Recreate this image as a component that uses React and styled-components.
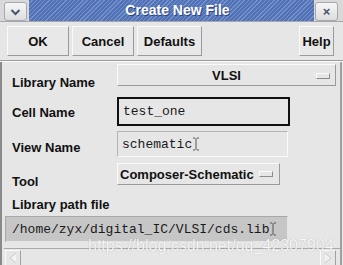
import React from 'react'
import styled, { createGlobalStyle } from 'styled-components'

const Global = createGlobalStyle`
  html, body { margin: 0; padding: 0; background: #e6e6e6; }
  body { font-family: "Liberation Sans", Arial, sans-serif; }
`;

const Window = styled.div`
  position: relative;
  width: 343px;
  height: 265px;
  overflow: hidden;
  background: #e6e6e6;
  display: flex;
  flex-direction: column;
`;

const TitleBar = styled.div`
  height: 21px;
  display: flex;
  background: #d9d9d9;
  border-bottom: 1px solid #a6a6a6;
`;

const TitleButton = styled.div`
  width: 21px;
  height: 17px;
  margin: 2px ${p => p.$right ? '5px' : '2px'} 0 ${p => p.$right ? '1px' : '4px'};
  border: 1px solid #a4a8b0;
  border-radius: 3px;
  background: linear-gradient(#f7f7f7, #dcdcdc);
  display: flex;
  align-items: center;
  justify-content: center;
  color: #4a5468;
  font-weight: bold;
  font-size: 13px;
`;

const TitleStrip = styled.div`
  flex: 1;
  background: repeating-linear-gradient(135deg, #5272b8 0 2px, #7591cc 2px 3px);
  color: #fff;
  font-weight: bold;
  font-size: 14px;
  line-height: 21px;
  text-align: center;
  padding-left: 12px;
  text-shadow: 1px 1px 0 #2c4380;
`;

const ButtonBar = styled.div`
  display: flex;
  gap: 3px;
  padding: 4px 9px 0 7px;
`;

const BarButton = styled.button`
  width: ${p => p.$w}px;
  height: 30px;
  margin-left: ${p => p.$push ? 'auto' : '0'};
  padding: 0;
  background: #e8e8e8;
  border: 1px solid;
  border-color: #fafafa #9a9a9a #9a9a9a #fafafa;
  font-family: "Liberation Sans", Arial, sans-serif;
  font-weight: bold;
  font-size: 13px;
  color: #111;
`;

const Separator = styled.div`
  margin-top: 4px;
  border-top: 1px solid #9c9c9c;
  border-bottom: 1px solid #fbfbfb;
`;

const Panel = styled.div`
  flex: 1;
  display: flex;
  flex-direction: column;
  padding-top: 2px;
  border-left: 2px solid #8a8a8a;
  border-right: 2px solid #a0a0a0;
  margin-right: 1px;
`;

const Row = styled.div`
  height: ${p => p.$h}px;
  display: flex;
  align-items: flex-start;
`;

const Label = styled.div`
  width: 105px;
  padding-left: 10px;
  margin-top: ${p => p.$top || 0}px;
  font-weight: bold;
  font-size: 13px;
  line-height: 15px;
  color: #111;
`;

const CycleButton = styled.div`
  width: ${p => p.$w}px;
  height: 22px;
  box-sizing: border-box;
  display: flex;
  align-items: center;
  justify-content: ${p => p.$center ? 'center' : 'flex-start'};
  position: relative;
  padding: 0 2px;
  background: #e6e6e6;
  border: 1px solid;
  border-color: #fafafa #9a9a9a #9a9a9a #fafafa;
  font-weight: bold;
  font-size: 13px;
  color: #111;
`;

const Indicator = styled.span`
  width: 12px;
  height: 4px;
  margin-left: ${p => p.$abs ? '0' : '5px'};
  position: ${p => p.$abs ? 'absolute' : 'static'};
  right: 5px;
  top: 8px;
  background: #e6e6e6;
  border: 1px solid;
  border-color: #fafafa #8c8c8c #8c8c8c #fafafa;
`;

const Field = styled.div`
  width: ${p => p.$w}px;
  height: ${p => p.$h}px;
  box-sizing: border-box;
  display: flex;
  align-items: center;
  padding-left: ${p => p.$pad}px;
  margin-left: ${p => p.$ml || 0}px;
  margin-top: ${p => p.$mt || 0}px;
  background: ${p => p.$bg || '#e6e6e6'};
  border: ${p => p.$bw || 1}px solid;
  border-color: ${p => p.$bc || '#b4b4b4 #fafafa #fafafa #b4b4b4'};
  font-family: "Liberation Mono", "Courier New", monospace;
  font-size: 13px;
  color: #1a1a1a;
  white-space: nowrap;
`;

const PathLabel = styled(Label)`
  margin-top: 12px;
  line-height: 16px;
  width: auto;
`;

const Scrollbar = styled.div`
  margin: 6px 0 0 2px;
  height: 16px;
  border-top: 1px solid #a8a8a8;
  display: flex;
  align-items: stretch;
  padding: 1px 4px 0 1px;
`;

const Arrow = styled.div`
  width: 14px;
  border: 1px solid;
  border-color: #fafafa #a0a0a0 #a0a0a0 #fafafa;
  display: flex;
  align-items: center;
  justify-content: center;
`;

const Trough = styled.div`
  flex: 1;
  border-bottom: 1px solid #cfcfcf;
`;

const Watermark = styled.div`
  position: absolute;
  left: 88px;
  top: 237px;
  font-family: "Liberation Sans", Arial, sans-serif;
  font-size: 16px;
  line-height: 18px;
  color: rgba(255, 255, 255, 0.92);
  text-shadow: 0 0 1px rgba(80, 80, 80, 0.45);
  pointer-events: none;
`;

const IBeam = () => (
  <svg width="6" height="14" viewBox="0 0 6 14" style={{ marginLeft: 1 }}>
    <path d="M0 1h2M4 1h2M3 1v12M0 13h2M4 13h2" stroke="#555" strokeWidth="1" fill="none" />
  </svg>
);

const Chevron = () => (
  <svg width="11" height="8" viewBox="0 0 11 8">
    <path d="M1.5 2l4 4 4-4" stroke="#4a5670" strokeWidth="2" fill="none" />
  </svg>
);

const ArrowGlyph = ({ dir }) => (
  <svg width="10" height="12" viewBox="0 0 10 12">
    <path d={dir === 'left' ? 'M8 1L2 6l6 5' : 'M2 1l6 5-6 5'} stroke="#c8c8c8" strokeWidth="1" fill="#f2f2f2" />
  </svg>
);

export default function App() {
  return (
    <Window>
      <Global />
      <TitleBar>
        <TitleButton><Chevron /></TitleButton>
        <TitleStrip>Create New File</TitleStrip>
        <TitleButton $right>×</TitleButton>
      </TitleBar>
      <ButtonBar>
        <BarButton $w={62}>OK</BarButton>
        <BarButton $w={62}>Cancel</BarButton>
        <BarButton $w={65}>Defaults</BarButton>
        <BarButton $w={35} $push>Help</BarButton>
      </ButtonBar>
      <Separator />
      <Panel>
        <Row $h={33}>
          <Label $top={11}>Library Name</Label>
          <CycleButton $w={219} $center>VLSI<Indicator $abs /></CycleButton>
        </Row>
        <Row $h={34}>
          <Label $top={8}>Cell Name</Label>
          <Field $w={173} $h={29} $pad={4} $bw={2} $bc="#111">test_one</Field>
        </Row>
        <Row $h={32}>
          <Label $top={9}>View Name</Label>
          <Field $w={171} $h={26} $pad={4}>schematic<IBeam /></Field>
        </Row>
        <Row $h={22}>
          <Label $top={11}>Tool</Label>
          <CycleButton $w={163}>Composer-Schematic<Indicator /></CycleButton>
        </Row>
        <PathLabel>Library path file</PathLabel>
        <Field $w={283} $h={26} $pad={6} $ml={3} $mt={3} $bg="#c6c6c6" $bc="#a8a8a8 #e4e4e4 #e4e4e4 #a8a8a8">
          /home/zyx/digital_IC/VLSI/cds.lib<IBeam />
        </Field>
        <Scrollbar>
          <Arrow><ArrowGlyph dir="left" /></Arrow>
          <Trough />
          <Arrow><ArrowGlyph dir="right" /></Arrow>
        </Scrollbar>
      </Panel>
      <Watermark>https://blog.csdn.net/qq_42307904</Watermark>
    </Window>
  );
}
